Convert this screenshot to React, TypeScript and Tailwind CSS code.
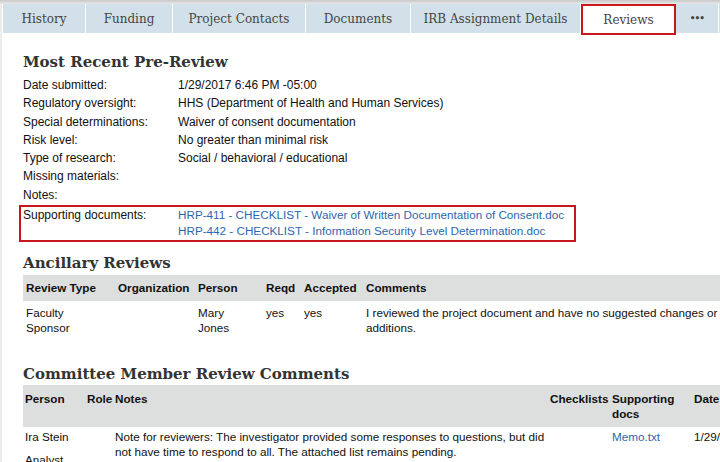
import React from 'react';

const slab = "font-['DejaVu_Serif',serif]";
const sans = "font-['Liberation_Sans',Arial,sans-serif]";

const tabs = [
    { label: 'History', w: 'w-[83px]' },
    { label: 'Funding', w: 'w-[87px]' },
    { label: 'Project Contacts', w: 'w-[133px]' },
    { label: 'Documents', w: 'w-[105px]' },
    { label: 'IRB Assignment Details', w: 'w-[170px]' },
];

const preReview: [string, string][] = [
    ['Date submitted:', '1/29/2017 6:46 PM -05:00'],
    ['Regulatory oversight:', 'HHS (Department of Health and Human Services)'],
    ['Special determinations:', 'Waiver of consent documentation'],
    ['Risk level:', 'No greater than minimal risk'],
    ['Type of research:', 'Social / behavioral / educational'],
    ['Missing materials:', ''],
    ['Notes:', ''],
];

export default function App() {
    return (
        <div className={`w-[720px] h-[462px] overflow-hidden bg-white text-[12px] text-[#111] ${sans}`}>
            <div className="h-[4px] bg-gradient-to-b from-[#c8c8c8] to-[#e8e8e8]" />
            <div className="flex h-full border-l-[2px] border-[#ececec]">
                <div className="flex-1 min-w-0">
                    {/* Tabs */}
                    <div className={`flex h-[29px] pl-[1px] ${slab} text-[12px] text-[#444]`}>
                        {tabs.map((t) => (
                            <div key={t.label} className={`${t.w} shrink-0 flex items-center justify-center bg-[#d2e1e9] border-r border-white`}>
                                {t.label}
                            </div>
                        ))}
                        <div className="w-[95px] h-[31px] shrink-0 flex items-center justify-center bg-white border-2 border-[#c8161d]">
                            Reviews
                        </div>
                        <div className="w-[43px] shrink-0 flex items-center justify-center bg-[#d2e1e9] border-r border-white text-[9px] font-bold tracking-[-1px]">
                            •••
                        </div>
                        <div className="flex-1 bg-[#d2e1e9]" />
                    </div>

                    <div className="pl-[21px]">
                        <h2 className={`${slab} font-bold text-[15px] text-[#333] mt-[18px] leading-[22px]`}>Most Recent Pre-Review</h2>
                        <div className="mt-[3px]">
                            {preReview.map(([k, v]) => (
                                <div key={k} className="flex h-[18.3px] leading-[18px]">
                                    <div className="w-[155px] shrink-0">{k}</div>
                                    <div className="whitespace-nowrap">{v}</div>
                                </div>
                            ))}
                        </div>
                        <div className="flex -ml-[4px] w-[557px] mt-[1px] border-2 border-[#c8161d] pl-[2px] pt-[0px] pb-[1px] leading-[16px]">
                            <div className="w-[155px] shrink-0">Supporting documents:</div>
                            <div className="text-[#2e66b0] whitespace-nowrap text-[11.7px]">
                                <div>HRP-411 - CHECKLIST - Waiver of Written Documentation of Consent.doc</div>
                                <div>HRP-442 - CHECKLIST - Information Security Level Determination.doc</div>
                            </div>
                        </div>

                        <h2 className={`${slab} font-bold text-[15px] text-[#333] mt-[10px] mb-[1px] leading-[22px]`}>Ancillary Reviews</h2>
                        <div className="w-[760px] text-[11.7px]">
                            <div className="flex h-[26px] items-center bg-[#dddede] font-bold px-[3px] whitespace-nowrap">
                                <div className="w-[92px]">Review Type</div>
                                <div className="w-[80px]">Organization</div>
                                <div className="w-[68px]">Person</div>
                                <div className="w-[38px]">Reqd</div>
                                <div className="w-[62px]">Accepted</div>
                                <div>Comments</div>
                            </div>
                            <div className="flex px-[3px] pt-[4px] leading-[15px] whitespace-nowrap">
                                <div className="w-[92px]">Faculty<br />Sponsor</div>
                                <div className="w-[80px]" />
                                <div className="w-[68px]">Mary<br />Jones</div>
                                <div className="w-[38px]">yes</div>
                                <div className="w-[62px]">yes</div>
                                <div>I reviewed the project document and have no suggested changes or<br />additions.</div>
                            </div>
                        </div>

                        <h2 className={`${slab} font-bold text-[15px] text-[#333] mt-[28px] leading-[22px]`}>Committee Member Review Comments</h2>
                        <div className="w-[760px] text-[11.7px]">
                            <div className="flex h-[42px] bg-[#dddede] font-bold px-[2px] pt-[6px] leading-[15px] whitespace-nowrap">
                                <div className="w-[62px]">Person</div>
                                <div className="w-[28px]">Role</div>
                                <div className="w-[435px]">Notes</div>
                                <div className="w-[62px]">Checklists</div>
                                <div className="w-[82px]">Supporting<br />docs</div>
                                <div>Date</div>
                            </div>
                            <div className="flex px-[2px] pt-[2px] leading-[15px] whitespace-nowrap">
                                <div className="w-[62px]">Ira Stein<br /><span className="leading-[31px]">Analyst</span></div>
                                <div className="w-[28px]" />
                                <div className="w-[435px]">Note for reviewers: The investigator provided some responses to questions, but did<br />not have time to respond to all. The attached list remains pending.</div>
                                <div className="w-[62px]" />
                                <div className="w-[82px] text-[#2e66b0]">Memo.txt</div>
                                <div>1/29/2017</div>
                            </div>
                        </div>
                    </div>
                </div>
            </div>
        </div>
    );
}
